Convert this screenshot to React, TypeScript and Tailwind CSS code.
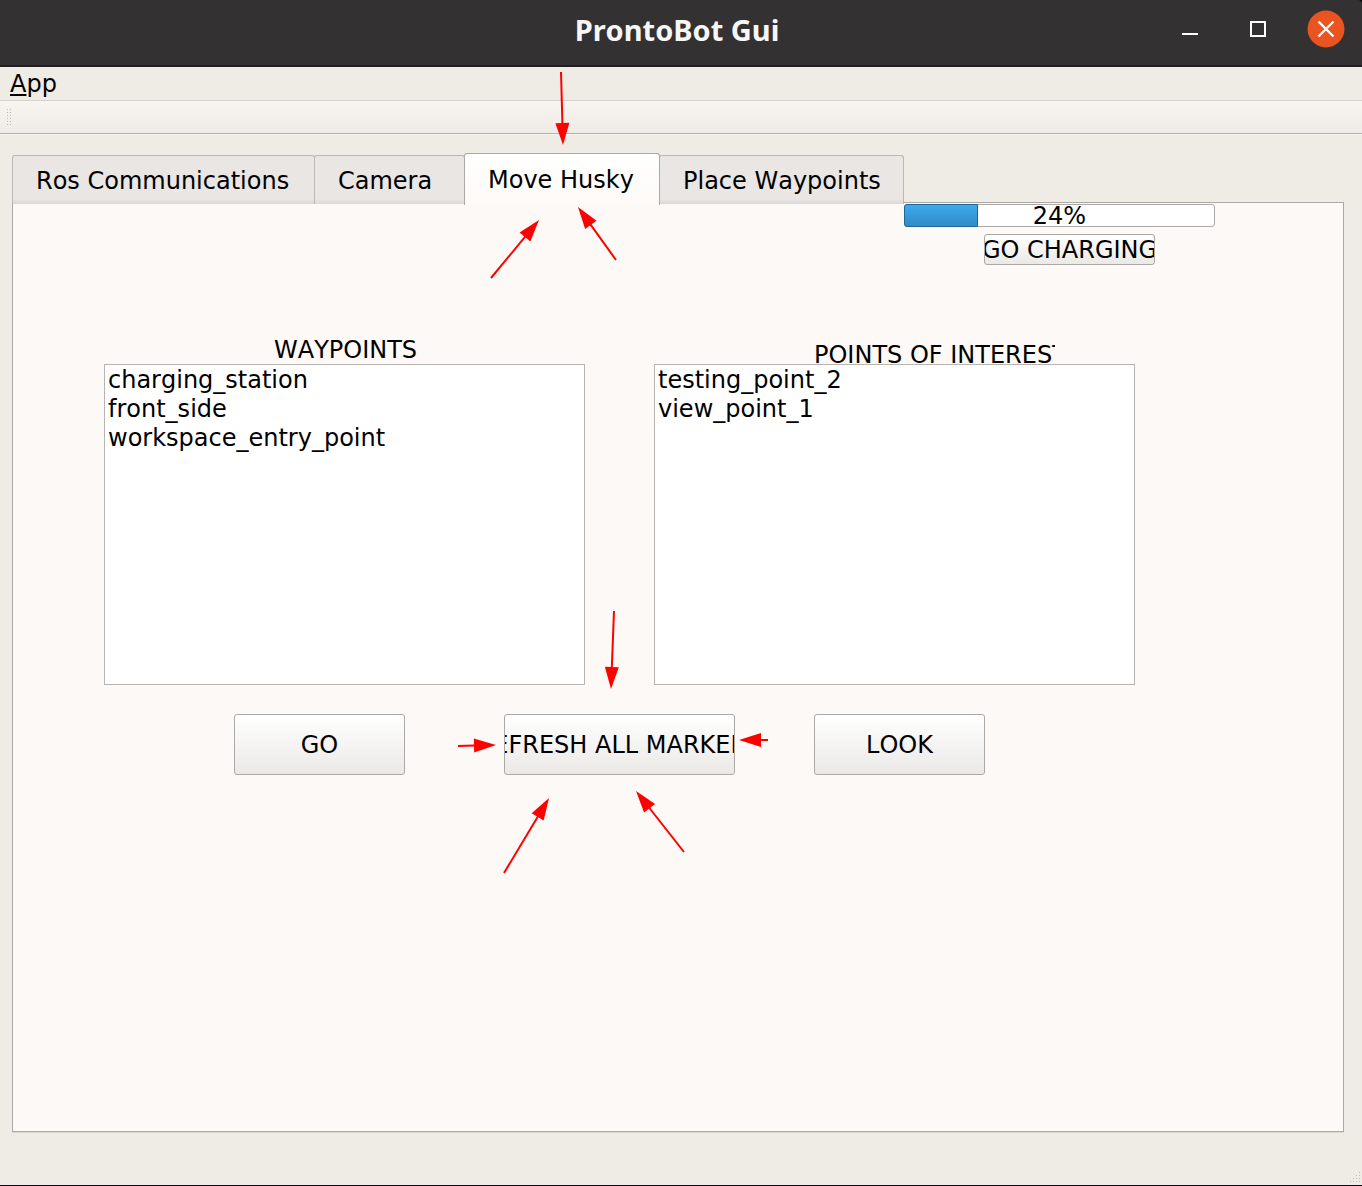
const tabs = ['Ros Communications', 'Camera', 'Move Husky', 'Place Waypoints'];
const tabWidths = ['w-[303px]', 'w-[151px]', 'w-[196px]', 'w-[245px]'];

const waypoints = ['charging_station', 'front_side', 'workspace_entry_point'];
const pointsOfInterest = ['testing_point_2', 'view_point_1'];

const battery = 24;

// Each arrow runs from its tail (x1, y1) to its tip (x2, y2).
const arrows = [
  [561, 72, 563, 145],
  [491, 278, 539, 220],
  [616, 260, 578, 207],
  [614, 611, 611, 689],
  [458, 746, 496, 745],
  [768, 740, 739, 740],
  [504, 873, 549, 798],
  [684, 852, 636, 791],
];

const HEAD_LENGTH = 22;
const HEAD_HALF_WIDTH = 7;

function Arrow({ points }: { points: number[] }) {
  const [x1, y1, x2, y2] = points;
  const length = Math.hypot(x2 - x1, y2 - y1);
  const angle = (Math.atan2(y2 - y1, x2 - x1) * 180) / Math.PI;
  return (
    <g transform={`translate(${x1} ${y1}) rotate(${angle})`}>
      <line x1="0" y1="0" x2={length - HEAD_LENGTH + 1} y2="0" stroke="#ff0000" strokeWidth="2" />
      <polygon
        points={`${length},0 ${length - HEAD_LENGTH},${-HEAD_HALF_WIDTH} ${length - HEAD_LENGTH},${HEAD_HALF_WIDTH}`}
        fill="#ff0000"
      />
    </g>
  );
}

function PushButton({ label, className }: { label: string; className: string }) {
  return (
    <button
      type="button"
      className={`flex shrink-0 items-center justify-center overflow-hidden rounded-[3px] border border-[#aba8a5] bg-linear-to-b from-white to-[#ebe9e6] pt-[2px] whitespace-nowrap ${className}`}
    >
      {label}
    </button>
  );
}

function PointList({ id, items }: { id: string; items: string[] }) {
  return (
    <ul
      role="listbox"
      aria-labelledby={id}
      className="h-[321px] w-[481px] border border-[#b7b4b1] bg-white pt-px pl-[3px]"
    >
      {items.map((item) => (
        <li key={item} role="option" aria-selected={false} className="leading-[29px]">
          {item}
        </li>
      ))}
    </ul>
  );
}

function TitleBar() {
  return (
    <header className="grid h-[67px] grid-cols-[1fr_auto_1fr] items-center rounded-tr-[4px] border-b-2 border-[#231f20] bg-[#333132] pr-2 pb-2">
      <div />
      <h1 className="pt-[2px] font-['Noto_Sans'] text-[29px] leading-[36px] font-bold text-[#f7f7f7]">ProntoBot Gui</h1>
      <div className="flex justify-end gap-[30px] pr-[9px]">
        <button type="button" aria-label="Minimize" className="size-[38px]">
          <svg viewBox="0 0 38 38" className="size-[38px]">
            <rect x="11" y="23" width="16" height="2" fill="#fff" />
          </svg>
        </button>
        <button type="button" aria-label="Maximize" className="size-[38px]">
          <svg viewBox="0 0 38 38" className="size-[38px]">
            <rect x="12" y="12" width="14" height="14" fill="none" stroke="#fff" strokeWidth="2" />
          </svg>
        </button>
        <button type="button" aria-label="Close" className="size-[38px]">
          <svg viewBox="0 0 38 38" className="size-[38px]">
            <circle cx="19" cy="19" r="18.5" fill="#e95420" />
            <path d="M11.5 11.5L26.5 26.5M26.5 11.5L11.5 26.5" stroke="#fff" strokeWidth="2.4" />
          </svg>
        </button>
      </div>
    </header>
  );
}

export default function App() {
  return (
    <div className="bg-black">
      <div className="relative flex min-h-screen flex-col overflow-hidden border-b border-[#0c0a10] bg-[#efebe7] font-['DejaVu_Sans',sans-serif] text-[24px] leading-[29px] text-black [font-kerning:none]">
        <div className="bg-black">
          <TitleBar />
        </div>

        <nav className="flex h-[34px] items-center border-b border-[#d3d0cc] bg-[#efece6] pt-[2px] pl-[10px]">
          <button type="button">
            <span className="underline decoration-2 underline-offset-2">A</span>pp
          </button>
        </nav>

        <div className="flex h-[33px] items-center border-b border-[#b5b2ae] bg-linear-to-b from-[#f8f5f0] to-[#efebe6] pl-[7px]" role="toolbar">
          <svg viewBox="0 0 5 17" className="h-[17px] w-[5px]" fill="#bfbbb7">
            {[0, 3, 6, 9, 12, 15].map((y) => (
              <g key={y}>
                <rect x="0" y={y} width="1" height="1" />
                <rect x="3" y={y} width="1" height="1" />
              </g>
            ))}
          </svg>
        </div>

        <main className="flex flex-1 flex-col border-t border-[#f6f4f0] bg-[#efece6] pt-[18px] pr-[18px] pb-[53px] pl-3">
          <div role="tablist" className="relative -mb-[3px] flex h-[52px] items-start">
            {tabs.map((tab, i) => {
              const selected = tab === 'Move Husky';
              return (
                <button
                  key={tab}
                  type="button"
                  role="tab"
                  aria-selected={selected}
                  className={`${tabWidths[i]} ${i > 0 ? '-ml-px' : ''} shrink-0 rounded-t-[3px] border border-b-0 pt-[2px] pl-[23px] text-left whitespace-nowrap ${
                    selected
                      ? 'relative h-[52px] border-[#aba8a5] bg-linear-to-b from-white to-[#fdfaf7]'
                      : 'mt-[2px] h-[49px] border-[#bab7b4] bg-linear-to-b from-[#e9e6e3] from-90% to-[#dad8d4]'
                  }`}
                >
                  {tab}
                </button>
              );
            })}
          </div>

          <section
            role="tabpanel"
            aria-label="Move Husky"
            className="flex-1 border border-[#aba8a5] bg-[#fdf9f6] shadow-[0_1px_0_#dcd9d4]"
          >
            <div className="flex flex-col items-start gap-[7px] pt-px pl-[891px]">
              <div
                role="progressbar"
                aria-label="Battery"
                aria-valuenow={battery}
                className="relative h-[23px] w-[311px] rounded-[3px] border border-[#aba8a5] bg-white text-center leading-[23px]"
              >
                <div
                  className="absolute -top-px -left-px h-[23px] rounded-l-[3px] border border-[#20649a] bg-linear-to-b from-[#3daaee] to-[#308cc6]"
                  style={{ width: `${battery}%` }}
                />
                <span className="relative">{battery}%</span>
              </div>
              <PushButton label="GO CHARGING" className="ml-20 h-[31px] w-[171px]" />
            </div>

            <div className="flex gap-[69px] pt-[66px] pl-[91px]">
              <div>
                <h2 id="waypoints" className="h-[33px] pt-[5px] pl-[170px]">
                  WAYPOINTS
                </h2>
                <PointList id="waypoints" items={waypoints} />
              </div>
              <div>
                <h2 id="interest" className="ml-40 h-[33px] w-[241px] overflow-hidden pt-[10px] whitespace-nowrap">
                  POINTS OF INTEREST
                </h2>
                <PointList id="interest" items={pointsOfInterest} />
              </div>
            </div>

            <div className="flex pt-[29px] pl-[221px]">
              <PushButton label="GO" className="h-[61px] w-[171px]" />
              <PushButton label="REFRESH ALL MARKERS" className="ml-[99px] h-[61px] w-[231px]" />
              <PushButton label="LOOK" className="ml-[79px] h-[61px] w-[171px]" />
            </div>
          </section>
        </main>

        <svg
          viewBox="0 0 1362 1186"
          width="1362"
          height="1186"
          className="pointer-events-none absolute top-0 left-0 max-w-none"
          aria-hidden="true"
        >
          {arrows.map((points) => (
            <Arrow key={points.join()} points={points} />
          ))}
        </svg>

        <svg viewBox="0 0 12 12" className="absolute right-0 bottom-px size-3" fill="#bfbbb7" aria-hidden="true">
          {[0, 1, 2, 3].map((row) =>
            Array.from({ length: row + 1 }, (_, i) => (
              <rect key={`${row}-${i}`} x={9 - i * 3} y={row * 3} width="1" height="1" />
            )),
          )}
        </svg>
      </div>
    </div>
  );
}
